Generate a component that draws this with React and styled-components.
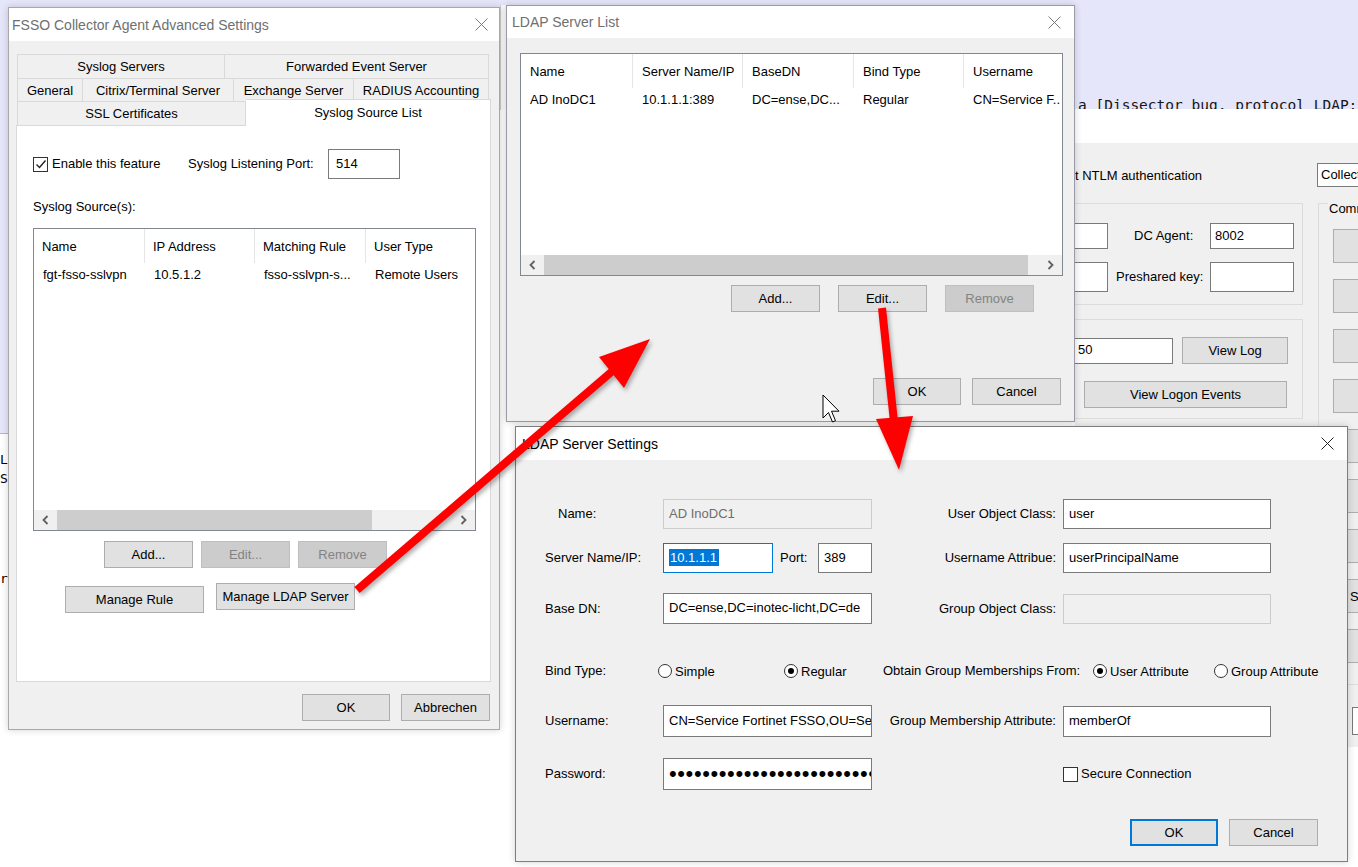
import React from "react";
import styled, { createGlobalStyle } from "styled-components";

const GlobalStyle = createGlobalStyle`
  html, body {
    margin: 0;
    padding: 0;
    background: #fff;
  }
  body {
    font-family: "Liberation Sans", Arial, sans-serif;
    font-size: 13px;
    color: #000;
  }
  * {
    box-sizing: border-box;
  }
`;

const Desktop = styled.div`
  position: relative;
  width: 1358px;
  height: 867px;
  overflow: hidden;
  background: #fff;
`;

/* background: packet list of the capture tool */
const PacketBand = styled.div`
  position: absolute;
  left: 0;
  top: 0;
  width: 1358px;
  height: 110px;
  background: #e6e6fa;
  overflow: hidden;
  display: flex;
  flex-direction: column;
  justify-content: flex-end;
`;

const PacketText = styled.div`
  font-family: "DejaVu Sans Mono", "Liberation Mono", monospace;
  font-size: 14.5px;
  line-height: 16px;
  padding-left: 1078px;
  margin-bottom: -3px;
  white-space: nowrap;
  color: #151515;
`;

const Seam = styled.div`
  position: absolute;
  left: 500px;
  top: 5px;
  width: 6px;
  height: 105px;
  background: #fbfbfb;
  border-left: 1px solid #d0d0d0;
`;

const SidePane = styled.div`
  position: absolute;
  left: 0;
  top: 0;
  width: 8px;
  height: 867px;
  overflow: hidden;
  background: #fff;
  display: flex;
  flex-direction: column;
`;

const SideTop = styled.div`
  height: 434px;
  flex-shrink: 0;
  background: #e6e6fa;
  border-bottom: 1px solid #b8b8b8;
`;

const SideLine = styled.div`
  font-family: "DejaVu Sans Mono", monospace;
  font-size: 13px;
  line-height: 19px;
  white-space: nowrap;
  margin-top: ${(p) => p.$mt || 0}px;
`;

/* windows */
const Window = styled.div`
  position: absolute;
  left: ${(p) => p.$x}px;
  top: ${(p) => p.$y}px;
  width: ${(p) => p.$w}px;
  height: ${(p) => p.$h}px;
  z-index: ${(p) => p.$z};
  background: #f0f0f0;
  border: 1px solid ${(p) => p.$border || "#a3a3a3"};
  box-shadow: 0 0 7px rgba(0, 0, 0, 0.18);
  display: flex;
  flex-direction: column;
  overflow: hidden;
`;

const TitleBar = styled.div`
  height: ${(p) => p.$h || 33}px;
  flex-shrink: 0;
  background: #fff;
  display: flex;
  align-items: center;
  justify-content: space-between;
  padding: 0 ${(p) => p.$pr}px 0 ${(p) => p.$pl}px;
`;

const TitleText = styled.span`
  font-size: 14px;
  white-space: nowrap;
  color: ${(p) => (p.$active ? "#000" : "#6f6f6f")};
`;

const Body = styled.div`
  flex: 1;
  display: flex;
  flex-direction: column;
  background: #f0f0f0;
  padding: ${(p) => p.$pad};
`;

const Row = styled.div`
  display: flex;
  align-items: ${(p) => p.$align || "center"};
  flex-shrink: 0;
  height: ${(p) => (p.$h ? p.$h + "px" : "auto")};
  margin-top: ${(p) => p.$mt || 0}px;
  margin-left: ${(p) => p.$ml || 0}px;
  justify-content: ${(p) => p.$justify || "flex-start"};
  gap: ${(p) => p.$gap || 0}px;
`;

const Text = styled.span`
  display: inline-block;
  flex-shrink: 0;
  white-space: nowrap;
  width: ${(p) => (p.$w ? p.$w + "px" : "auto")};
  margin-left: ${(p) => p.$ml || 0}px;
  text-align: ${(p) => p.$align || "left"};
  line-height: 16px;
`;

const Btn = styled.div`
  width: ${(p) => p.$w}px;
  height: ${(p) => p.$h || 27}px;
  flex-shrink: 0;
  margin-left: ${(p) => p.$ml || 0}px;
  margin-top: ${(p) => p.$mt || 0}px;
  display: flex;
  align-items: center;
  justify-content: ${(p) => (p.$left ? "flex-start" : "center")};
  padding-left: ${(p) => p.$pl || 0}px;
  white-space: nowrap;
  overflow: hidden;
  background: ${(p) => (p.$disabled ? "#cccccc" : "#e1e1e1")};
  border: ${(p) =>
    p.$default
      ? "2px solid #0078d7"
      : `1px solid ${p.$disabled ? "#bfbfbf" : "#adadad"}`};
  color: ${(p) => (p.$disabled ? "#838383" : "#000")};
`;

const Field = styled.div`
  width: ${(p) => p.$w}px;
  height: ${(p) => p.$h || 30}px;
  flex-shrink: 0;
  margin-left: ${(p) => p.$ml || 0}px;
  background: ${(p) => (p.$disabled ? "#f0f0f0" : "#fff")};
  border: 1px solid
    ${(p) => (p.$focus ? "#0078d7" : p.$disabled ? "#cccccc" : "#7a7a7a")};
  border-left-width: ${(p) => (p.$cut ? 0 : 1)}px;
  color: ${(p) => (p.$disabled ? "#6d6d6d" : "#000")};
  padding: 0 0 2px ${(p) => (p.$pl === undefined ? 5 : p.$pl)}px;
  display: flex;
  align-items: center;
  overflow: hidden;
  white-space: nowrap;
`;

const Selected = styled.span`
  background: #0078d7;
  color: #fff;
  padding: 0 2px 0 1px;
  line-height: 17px;
`;

const Dots = styled.span`
  font-size: 22px;
  letter-spacing: 0.6px;
  line-height: 1;
  margin-top: 2px;
`;

const Box = styled.div`
  width: 15px;
  height: 15px;
  flex-shrink: 0;
  margin-left: ${(p) => p.$ml || 0}px;
  background: #fff;
  border: 1px solid #333;
  display: flex;
  align-items: center;
  justify-content: center;
`;

const Radio = styled.div`
  width: 14px;
  height: 14px;
  flex-shrink: 0;
  border-radius: 50%;
  border: 1px solid #333;
  background: #fff;
  display: flex;
  align-items: center;
  justify-content: center;
  margin-right: 3px;

  &::after {
    content: "";
    width: 6px;
    height: 6px;
    border-radius: 50%;
    background: ${(p) => (p.$on ? "#000" : "transparent")};
  }
`;

const Option = styled.div`
  display: flex;
  align-items: center;
  width: ${(p) => p.$w}px;
  flex-shrink: 0;
  white-space: nowrap;
  margin-left: ${(p) => p.$ml || 0}px;
`;

/* tabs */
const TabRow = styled.div`
  display: flex;
  margin-left: 1px;
  height: ${(p) => p.$h}px;
  flex-shrink: 0;
`;

const Tab = styled.div`
  width: ${(p) => p.$w}px;
  flex-shrink: 0;
  display: flex;
  align-items: center;
  justify-content: center;
  white-space: nowrap;
  background: #f0f0f0;
  border: 1px solid #d9d9d9;
  border-bottom: none;

  & + & {
    border-left: none;
  }
`;

const ActiveTab = styled(Tab)`
  position: relative;
  z-index: 1;
  height: 27px;
  margin-top: -2px;
  padding-bottom: 1px;
  background: #fff;
`;

const TabPanel = styled.div`
  height: 557px;
  flex-shrink: 0;
  background: #fff;
  border: 1px solid #d9d9d9;
  display: flex;
  flex-direction: column;
  padding: 23px 0 0 16px;
`;

/* list views */
const ListView = styled.div`
  width: ${(p) => p.$w}px;
  height: ${(p) => p.$h}px;
  flex-shrink: 0;
  margin-top: ${(p) => p.$mt || 0}px;
  background: #fff;
  border: 1px solid #828790;
  display: flex;
  flex-direction: column;
`;

const ListHead = styled.div`
  display: flex;
  height: 34px;
  flex-shrink: 0;
`;

const HeadCell = styled.div`
  width: ${(p) => (p.$w ? p.$w + "px" : "auto")};
  flex: ${(p) => (p.$w ? "0 0 auto" : "1")};
  padding-left: ${(p) => p.$pl}px;
  border-right: ${(p) => (p.$w ? "1px solid #e5e5e5" : "none")};
  display: flex;
  align-items: center;
  white-space: nowrap;
  overflow: hidden;
`;

const ListRow = styled.div`
  display: flex;
  height: 22px;
  align-items: center;
  flex-shrink: 0;
`;

const Cell = styled.div`
  width: ${(p) => (p.$w ? p.$w + "px" : "auto")};
  flex: ${(p) => (p.$w ? "0 0 auto" : "1")};
  padding-left: ${(p) => p.$pl}px;
  white-space: nowrap;
  overflow: hidden;
`;

const Filler = styled.div`
  flex: 1;
`;

const HScroll = styled.div`
  height: 20px;
  flex-shrink: 0;
  display: flex;
  background: #f0f0f0;
`;

const ScrollArrow = styled.div`
  width: 23px;
  flex-shrink: 0;
  display: flex;
  align-items: center;
  justify-content: center;
`;

const ScrollTrack = styled.div`
  flex: 1;
  display: flex;
`;

const ScrollThumb = styled.div`
  width: ${(p) => p.$w}px;
  background: #cdcdcd;
`;

/* background collector window */
const BgWindow = styled.div`
  position: absolute;
  left: 1075px;
  top: 109px;
  width: 330px;
  height: 638px;
  z-index: 1;
  background: #f0f0f0;
  display: flex;
  flex-direction: column;
  overflow: hidden;
`;

const BgTitle = styled.div`
  height: 34px;
  flex-shrink: 0;
  background: #fff;
`;

const BgBody = styled.div`
  flex: 1;
  display: flex;
  flex-direction: column;
  padding-top: 20px;
`;

const Clip = styled.div`
  width: ${(p) => p.$w}px;
  flex-shrink: 0;
  overflow: hidden;
  white-space: nowrap;
`;

const PullLeft = styled.span`
  display: inline-block;
  margin-left: -42px;
`;

const Columns = styled.div`
  display: flex;
  margin-top: 16px;
  flex-shrink: 0;
`;

const Column = styled.div`
  display: flex;
  flex-direction: column;
  width: ${(p) => p.$w}px;
  margin-left: ${(p) => p.$ml || 0}px;
  flex-shrink: 0;
`;

const GroupBox = styled.div`
  height: ${(p) => p.$h}px;
  flex-shrink: 0;
  margin-top: ${(p) => p.$mt || 0}px;
  border: 1px solid #dcdcdc;
  border-left-width: ${(p) => (p.$open ? 0 : 1)}px;
  border-right-width: ${(p) => (p.$open ? 1 : 0)}px;
  display: flex;
  flex-direction: column;
  padding-top: ${(p) => p.$pt || 0}px;
`;

const Legend = styled.span`
  align-self: flex-start;
  margin: -3px 0 0 9px;
  padding: 0 1px;
  background: #f0f0f0;
  line-height: 16px;
  white-space: nowrap;
`;

const CommStack = styled.div`
  display: flex;
  flex-direction: column;
  gap: 16px;
  margin: 12px 0 0 14px;
`;

/* overlays */
const Overlay = styled.svg`
  position: absolute;
  left: 0;
  top: 0;
  z-index: 10;
  pointer-events: none;
  filter: drop-shadow(2px 3px 2px rgba(0, 0, 0, 0.3));
`;

const Pointer = styled.svg`
  position: absolute;
  left: 822px;
  top: 394px;
  z-index: 11;
`;

const CloseIcon = ({ color = "#333" }) => (
  <svg width="13" height="13" viewBox="0 0 13 13">
    <path d="M0.5 0.5 L12.5 12.5 M12.5 0.5 L0.5 12.5" stroke={color} strokeWidth="1" fill="none" />
  </svg>
);

const Chevron = ({ dir }) => (
  <svg width="7" height="10" viewBox="0 0 7 10">
    <path
      d={dir === "left" ? "M5.5 1 L1.5 5 L5.5 9" : "M1.5 1 L5.5 5 L1.5 9"}
      stroke="#606060"
      strokeWidth="1.8"
      fill="none"
    />
  </svg>
);

const Check = () => (
  <svg width="12" height="12" viewBox="0 0 12 12">
    <path d="M1.5 6.5 L4.5 9.5 L10.5 2.5" stroke="#222" strokeWidth="1.4" fill="none" />
  </svg>
);

const Scrollbar = ({ thumb }) => (
  <HScroll>
    <ScrollArrow>
      <Chevron dir="left" />
    </ScrollArrow>
    <ScrollTrack>
      <ScrollThumb $w={thumb} />
    </ScrollTrack>
    <ScrollArrow>
      <Chevron dir="right" />
    </ScrollArrow>
  </HScroll>
);

const syslogCols = [
  { label: "Name", w: 111 },
  { label: "IP Address", w: 110 },
  { label: "Matching Rule", w: 111 },
  { label: "User Type" },
];
const syslogRow = ["fgt-fsso-sslvpn", "10.5.1.2", "fsso-sslvpn-s...", "Remote Users"];

const ldapCols = [
  { label: "Name", w: 112 },
  { label: "Server Name/IP", w: 110 },
  { label: "BaseDN", w: 111 },
  { label: "Bind Type", w: 110 },
  { label: "Username" },
];
const ldapRow = ["AD InoDC1", "10.1.1.1:389", "DC=ense,DC...", "Regular", "CN=Service F.."];

const commButtons = ["", "", "", "", "", "", "", "Set Group Filters", ""];

function AdvancedSettings() {
  return (
    <Window $x={8} $y={7} $w={492} $h={723} $z={2} $border="#a8a8a8">
      <TitleBar $pl={3} $pr={11}>
        <TitleText>FSSO Collector Agent Advanced Settings</TitleText>
        <CloseIcon color="#7a7a7a" />
      </TitleBar>
      <Body $pad="13px 8px 0 7px">
        <TabRow $h={24}>
          <Tab $w={208}>Syslog Servers</Tab>
          <Tab $w={264}>Forwarded Event Server</Tab>
        </TabRow>
        <TabRow $h={23}>
          <Tab $w={66}>General</Tab>
          <Tab $w={151}>Citrix/Terminal Server</Tab>
          <Tab $w={120}>Exchange Server</Tab>
          <Tab $w={135}>RADIUS Accounting</Tab>
        </TabRow>
        <TabRow $h={24}>
          <Tab $w={229}>SSL Certificates</Tab>
          <ActiveTab $w={245}>Syslog Source List</ActiveTab>
        </TabRow>
        <TabPanel>
          <Row $h={30}>
            <Box>
              <Check />
            </Box>
            <Text $w={136} $ml={4}>Enable this feature</Text>
            <Text $w={140}>Syslog Listening Port:</Text>
            <Field $w={72} $pl={7}>514</Field>
          </Row>
          <Row $mt={20}>
            <Text>Syslog Source(s):</Text>
          </Row>
          <ListView $w={443} $h={303} $mt={13}>
            <ListHead>
              {syslogCols.map((c) => (
                <HeadCell key={c.label} $w={c.w} $pl={8}>
                  {c.label}
                </HeadCell>
              ))}
            </ListHead>
            <ListRow>
              {syslogRow.map((v, i) => (
                <Cell key={v} $w={syslogCols[i].w} $pl={9}>
                  {v}
                </Cell>
              ))}
            </ListRow>
            <Filler />
            <Scrollbar thumb={315} />
          </ListView>
          <Row $mt={10} $ml={71} $gap={8}>
            <Btn $w={89}>Add...</Btn>
            <Btn $w={89} $disabled>Edit...</Btn>
            <Btn $w={89} $disabled>Remove</Btn>
          </Row>
          <Row $mt={15} $align="flex-start">
            <Btn $w={139} $ml={32} $mt={3}>Manage Rule</Btn>
            <Btn $w={139} $ml={12}>Manage LDAP Server</Btn>
          </Row>
        </TabPanel>
        <Row $mt={12} $justify="flex-end" $gap={11} style={{ marginRight: 1 }}>
          <Btn $w={88}>OK</Btn>
          <Btn $w={89}>Abbrechen</Btn>
        </Row>
      </Body>
    </Window>
  );
}

function ServerList() {
  return (
    <Window $x={506} $y={5} $w={569} $h={417} $z={3} $border="#9a9aa8">
      <TitleBar $h={32} $pl={5} $pr={13}>
        <TitleText>LDAP Server List</TitleText>
        <CloseIcon color="#7a7a7a" />
      </TitleBar>
      <Body $pad="15px 0 0 13px">
        <ListView $w={543} $h={223}>
          <ListHead>
            {ldapCols.map((c) => (
              <HeadCell key={c.label} $w={c.w} $pl={9}>
                {c.label}
              </HeadCell>
            ))}
          </ListHead>
          <ListRow>
            {ldapRow.map((v, i) => (
              <Cell key={v} $w={ldapCols[i].w} $pl={9}>
                {v}
              </Cell>
            ))}
          </ListRow>
          <Filler />
          <Scrollbar thumb={484} />
        </ListView>
        <Row $mt={9} $ml={211} $gap={18}>
          <Btn $w={89}>Add...</Btn>
          <Btn $w={89}>Edit...</Btn>
          <Btn $w={89} $disabled>Remove</Btn>
        </Row>
        <Row $mt={66} $ml={353} $gap={11}>
          <Btn $w={88}>OK</Btn>
          <Btn $w={89}>Cancel</Btn>
        </Row>
      </Body>
    </Window>
  );
}

function ServerSettings() {
  return (
    <Window $x={515} $y={426} $w={833} $h={436} $z={4} $border="#7d7d7d">
      <TitleBar $pl={6} $pr={13}>
        <TitleText $active>LDAP Server Settings</TitleText>
        <CloseIcon color="#222" />
      </TitleBar>
      <Body $pad="39px 29px 0 29px">
        <Row $h={30}>
          <Text $w={105} $ml={13}>Name:</Text>
          <Field $w={209} $disabled>AD InoDC1</Field>
          <Text $w={184} $align="right">User Object Class:</Text>
          <Field $w={208} $ml={7}>user</Field>
        </Row>
        <Row $h={30} $mt={14}>
          <Text $w={118}>Server Name/IP:</Text>
          <Field $w={110} $focus>
            <Selected>10.1.1.1</Selected>
          </Field>
          <Text $w={38} $ml={7}>Port:</Text>
          <Field $w={54}>389</Field>
          <Text $w={184} $align="right">Username Attribue:</Text>
          <Field $w={208} $ml={7}>userPrincipalName</Field>
        </Row>
        <Row $h={33} $mt={19}>
          <Text $w={118}>Base DN:</Text>
          <Field $w={209} $h={31}>DC=ense,DC=inotec-licht,DC=de</Field>
          <Text $w={184} $align="right">Group Object Class:</Text>
          <Field $w={208} $ml={7} $disabled />
        </Row>
        <Row $h={22} $mt={35}>
          <Text $w={113}>Bind Type:</Text>
          <Option $w={126}>
            <Radio />
            Simple
          </Option>
          <Option $w={99}>
            <Radio $on />
            Regular
          </Option>
          <Text $w={210}>Obtain Group Memberships From:</Text>
          <Option $w={121}>
            <Radio $on />
            User Attribute
          </Option>
          <Option $w={120}>
            <Radio />
            Group Attribute
          </Option>
        </Row>
        <Row $h={32} $mt={23}>
          <Text $w={118}>Username:</Text>
          <Field $w={209} $h={32}>CN=Service Fortinet FSSO,OU=Se</Field>
          <Text $w={184} $align="right">Group Membership Attribute:</Text>
          <Field $w={208} $ml={7} $h={31}>memberOf</Field>
        </Row>
        <Row $h={32} $mt={21}>
          <Text $w={118}>Password:</Text>
          <Field $w={209} $h={32}>
            <Dots>{"•".repeat(25)}</Dots>
          </Field>
          <Box $ml={191} />
          <Text $ml={3}>Secure Connection</Text>
        </Row>
        <Row $mt={29} $justify="flex-end" $gap={11}>
          <Btn $w={88} $default>OK</Btn>
          <Btn $w={89}>Cancel</Btn>
        </Row>
      </Body>
    </Window>
  );
}

function CollectorWindow() {
  return (
    <BgWindow>
      <BgTitle />
      <BgBody>
        <Row $h={24}>
          <Clip $w={242}>
            <PullLeft>Support NTLM authentication</PullLeft>
          </Clip>
          <Field $w={100} $h={24} $pl={3}>Collector Agent</Field>
        </Row>
        <Columns>
          <Column $w={228}>
            <GroupBox $h={102} $pt={19} $open>
              <Row $h={26}>
                <Field $w={33} $h={26} $cut />
                <Text $w={76} $ml={26}>DC Agent:</Text>
                <Field $w={84} $h={26} $pl={4}>8002</Field>
              </Row>
              <Row $h={30} $mt={13}>
                <Field $w={33} $h={30} $cut />
                <Text $w={94} $ml={8}>Preshared key:</Text>
                <Field $w={84} $h={30} />
              </Row>
            </GroupBox>
            <GroupBox $h={100} $mt={14} $pt={17} $open>
              <Row $h={27}>
                <Field $w={98} $h={26} $cut $pl={3}>50</Field>
                <Btn $w={106} $ml={9}>View Log</Btn>
              </Row>
              <Row $mt={17}>
                <Btn $w={203} $ml={9}>View Logon Events</Btn>
              </Row>
            </GroupBox>
          </Column>
          <Column $w={120} $ml={15}>
            <GroupBox $h={482}>
              <Legend>Common Tasks</Legend>
              <CommStack>
                {commButtons.map((label, i) => (
                  <Btn key={i} $w={140} $h={34} $left $pl={16}>
                    {label}
                  </Btn>
                ))}
              </CommStack>
            </GroupBox>
            <Field $w={80} $h={28} $ml={34} style={{ marginTop: 22 }} />
          </Column>
        </Columns>
      </BgBody>
    </BgWindow>
  );
}

function Arrows() {
  return (
    <Overlay width="1358" height="867" viewBox="0 0 1358 867">
      <g fill="#ff0000" stroke="none">
        <line x1="357" y1="590" x2="616" y2="368" stroke="#ff0000" strokeWidth="8" />
        <polygon points="650,339 599,357 624,388" />
        <line x1="882" y1="308" x2="894" y2="422" stroke="#ff0000" strokeWidth="8" />
        <polygon points="899,470 876,419 913,416" />
      </g>
    </Overlay>
  );
}

export default function App() {
  return (
    <>
      <GlobalStyle />
      <Desktop>
        <PacketBand>
          <PacketText>a [Dissector bug, protocol LDAP: packet-ber.c</PacketText>
        </PacketBand>
        <Seam />
        <SidePane>
          <SideTop />
          <SideLine $mt={16}>LDAP</SideLine>
          <SideLine>Se</SideLine>
          <SideLine $mt={81}>rn</SideLine>
        </SidePane>
        <CollectorWindow />
        <AdvancedSettings />
        <ServerList />
        <ServerSettings />
        <Arrows />
        <Pointer width="20" height="30" viewBox="0 0 20 30">
          <path
            d="M1 1 L1 24 L6.5 18.5 L10.5 28 L13.5 26.7 L9.5 17.2 L17 17.2 Z"
            fill="#fff"
            stroke="#000"
            strokeWidth="1"
            strokeLinejoin="round"
          />
        </Pointer>
      </Desktop>
    </>
  );
}
